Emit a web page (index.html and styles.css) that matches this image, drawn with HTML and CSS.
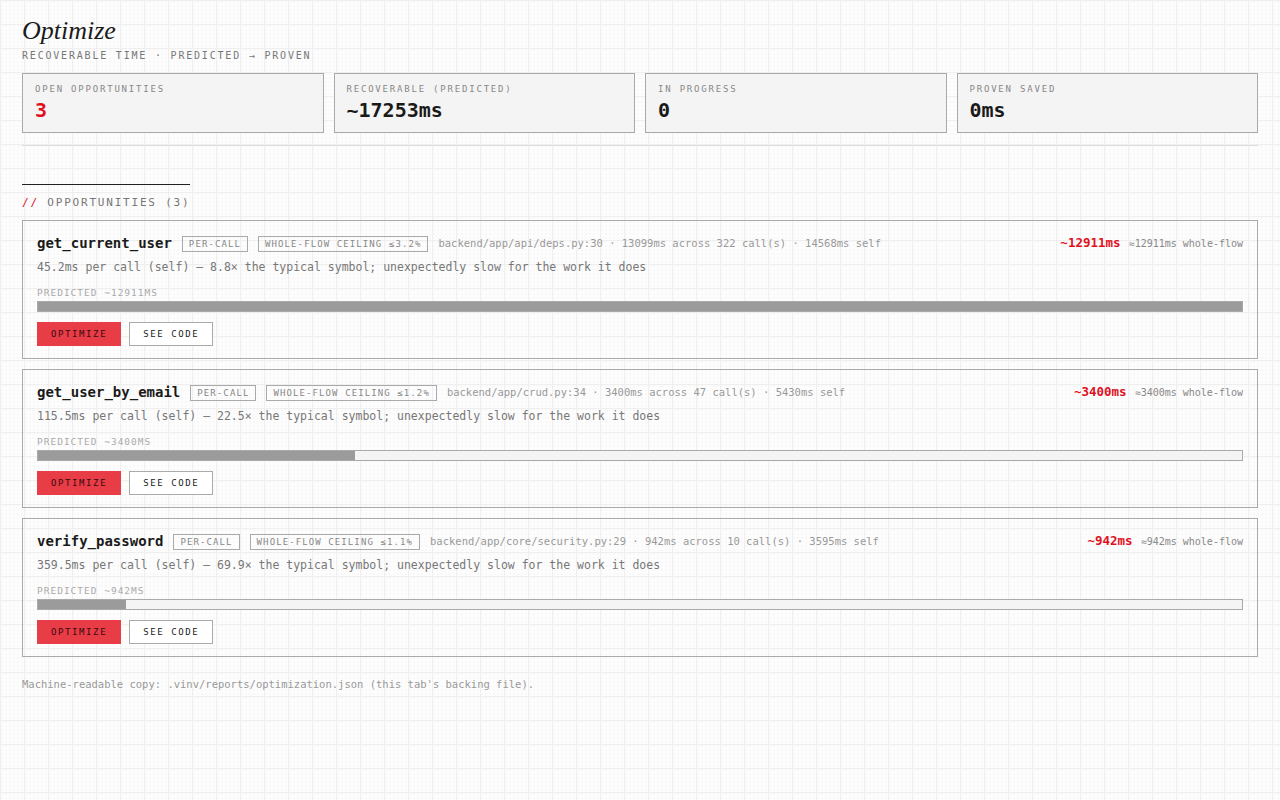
FILE: index.html
```html
<!DOCTYPE html>
<html lang="en">
<head>
    <meta charset="UTF-8">
    <meta name="viewport" content="width=device-width, initial-scale=1.0">
    <title>Optimize</title>
    <link rel="stylesheet" href="styles.css">
</head>
<body>
    <main class="page">
        <header class="head">
            <h1 class="title">Optimize</h1>
            <p class="subtitle">RECOVERABLE TIME · PREDICTED → PROVEN</p>
        </header>

        <section class="stats">
            <div class="stat">
                <div class="stat-label">OPEN OPPORTUNITIES</div>
                <div class="stat-value red">3</div>
            </div>
            <div class="stat">
                <div class="stat-label">RECOVERABLE (PREDICTED)</div>
                <div class="stat-value">~17253ms</div>
            </div>
            <div class="stat">
                <div class="stat-label">IN PROGRESS</div>
                <div class="stat-value">0</div>
            </div>
            <div class="stat">
                <div class="stat-label">PROVEN SAVED</div>
                <div class="stat-value">0ms</div>
            </div>
        </section>

        <hr class="divider">

        <h2 class="section-title"><span class="slash">//</span> OPPORTUNITIES (3)</h2>

        <div class="opps">
            <article class="opp">
                <div class="opp-row">
                    <span class="opp-name">get_current_user</span>
                    <span class="tag">PER-CALL</span>
                    <span class="tag">WHOLE-FLOW CEILING ≤3.2%</span>
                    <span class="opp-path">backend/app/api/deps.py:30 · 13099ms across 322 call(s) · 14568ms self</span>
                    <span class="opp-gain"><b>~12911ms</b> <span>≈12911ms whole-flow</span></span>
                </div>
                <p class="opp-desc">45.2ms per call (self) — 8.8× the typical symbol; unexpectedly slow for the work it does</p>
                <div class="pred-label">PREDICTED ~12911MS</div>
                <div class="bar"><div class="bar-fill" style="width:100%"></div></div>
                <div class="actions">
                    <a href="javascript:;" class="btn btn-red">OPTIMIZE</a>
                    <a href="javascript:;" class="btn">SEE CODE</a>
                </div>
            </article>

            <article class="opp">
                <div class="opp-row">
                    <span class="opp-name">get_user_by_email</span>
                    <span class="tag">PER-CALL</span>
                    <span class="tag">WHOLE-FLOW CEILING ≤1.2%</span>
                    <span class="opp-path">backend/app/crud.py:34 · 3400ms across 47 call(s) · 5430ms self</span>
                    <span class="opp-gain"><b>~3400ms</b> <span>≈3400ms whole-flow</span></span>
                </div>
                <p class="opp-desc">115.5ms per call (self) — 22.5× the typical symbol; unexpectedly slow for the work it does</p>
                <div class="pred-label">PREDICTED ~3400MS</div>
                <div class="bar"><div class="bar-fill" style="width:26.3%"></div></div>
                <div class="actions">
                    <a href="javascript:;" class="btn btn-red">OPTIMIZE</a>
                    <a href="javascript:;" class="btn">SEE CODE</a>
                </div>
            </article>

            <article class="opp">
                <div class="opp-row">
                    <span class="opp-name">verify_password</span>
                    <span class="tag">PER-CALL</span>
                    <span class="tag">WHOLE-FLOW CEILING ≤1.1%</span>
                    <span class="opp-path">backend/app/core/security.py:29 · 942ms across 10 call(s) · 3595ms self</span>
                    <span class="opp-gain"><b>~942ms</b> <span>≈942ms whole-flow</span></span>
                </div>
                <p class="opp-desc">359.5ms per call (self) — 69.9× the typical symbol; unexpectedly slow for the work it does</p>
                <div class="pred-label">PREDICTED ~942MS</div>
                <div class="bar"><div class="bar-fill" style="width:7.3%"></div></div>
                <div class="actions">
                    <a href="javascript:;" class="btn btn-red">OPTIMIZE</a>
                    <a href="javascript:;" class="btn">SEE CODE</a>
                </div>
            </article>
        </div>

        <p class="footnote">Machine-readable copy: .vinv/reports/optimization.json (this tab's backing file).</p>
    </main>
</body>
</html>
```

FILE: styles.css
```css
*{padding:0px;margin:0px;box-sizing:border-box;}

a{text-decoration:none;}

body{
    background-color:#fdfdfd;
    background-image:
        linear-gradient(#efefef 1px, transparent 1px),
        linear-gradient(90deg, #efefef 1px, transparent 1px),
        radial-gradient(circle, #f1f1f1 0.6px, transparent 0.8px);
    background-size:24px 24px, 24px 24px, 4px 4px;
    font-family:"DejaVu Sans Mono", monospace;
    color:#1a1a1a;
    min-height:800px;
}

.page{
    padding:15px 22px 40px;
}

/* header */
.title{
    font-family:"Liberation Serif", serif;
    font-style:italic;
    font-weight:normal;
    font-size:26px;
    line-height:32px;
    color:#1a1a1a;
}
.subtitle{
    margin-top:2px;
    font-size:10px;
    line-height:14px;
    letter-spacing:1.8px;
    color:#777;
}

/* stat cards */
.stats{
    margin-top:10px;
    display:grid;
    grid-template-columns:repeat(4, 1fr);
    gap:10px;
}
.stat{
    background:#f4f4f4;
    border:1px solid #aaa;
    padding:9px 12px 10px;
}
.stat-label{
    font-size:9px;
    line-height:12px;
    letter-spacing:1.8px;
    color:#888;
}
.stat-value{
    margin-top:3px;
    font-size:20px;
    line-height:24px;
    font-weight:bold;
    color:#1a1a1a;
}
.red{color:#e0101e;}

.divider{
    margin-top:12px;
    border:0;
    border-top:1px solid #ddd;
}

.section-title{
    display:inline-block;
    margin-top:38px;
    padding-top:11px;
    border-top:1px solid #222;
    font-size:11px;
    line-height:14px;
    font-weight:normal;
    letter-spacing:1.8px;
    color:#777;
}
.slash{color:#e0101e;}

/* opportunity cards */
.opps{
    margin-top:10px;
    display:flex;
    flex-direction:column;
    gap:10px;
}
.opp{
    border:1px solid #aaa;
    padding:13px 14px 12px 14px;
}
.opp-row{
    display:flex;
    align-items:center;
    gap:10px;
    height:17px;
    white-space:nowrap;
}
.opp-name{
    font-size:14px;
    line-height:16px;
    font-weight:bold;
    color:#1a1a1a;
}
.tag{
    border:1px solid #aaa;
    padding:0px 6px;
    font-size:9px;
    line-height:14px;
    letter-spacing:1.1px;
    color:#888;
    margin-top:3px;
}
.opp-path{
    font-size:10.5px;
    color:#999;
}
.opp-gain{
    margin-left:auto;
    font-size:10px;
    color:#888;
}
.opp-gain b{
    font-size:12.5px;
    color:#e0101e;
    margin-right:2px;
}
.opp-desc{
    margin-top:8px;
    font-size:11.5px;
    line-height:16px;
    color:#777;
}
.pred-label{
    margin-top:12px;
    font-size:9.5px;
    line-height:12px;
    letter-spacing:1px;
    color:#aaa;
}
.bar{
    margin-top:2px;
    height:11px;
    border:1px solid #aaa;
    background:#f4f4f4;
}
.bar-fill{
    height:100%;
    background:#9b9b9b;
}
.actions{
    margin-top:10px;
    display:flex;
    gap:8px;
}
.btn{
    display:block;
    height:24px;
    line-height:22px;
    padding:0px 13px;
    border:1px solid #aaa;
    background:#fff;
    font-size:9px;
    letter-spacing:1.6px;
    color:#222;
}
.btn-red{
    background:#e83c47;
    border-color:#e83c47;
    color:#3a0a0e;
}

.footnote{
    margin-top:20px;
    font-size:10.5px;
    line-height:14px;
    color:#999;
}
```
